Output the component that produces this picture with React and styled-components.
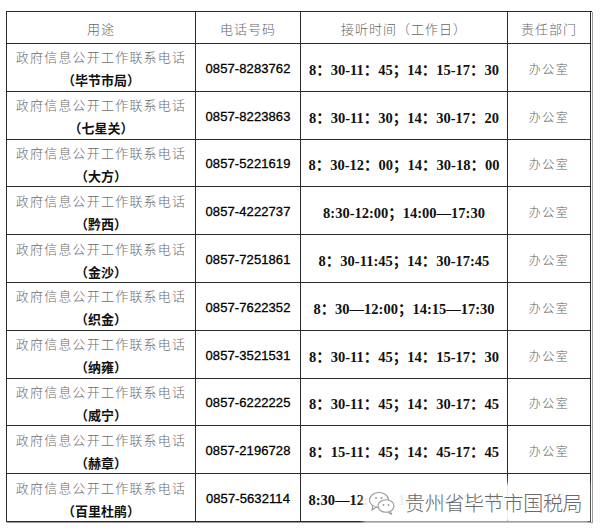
import React from 'react';
import styled, { createGlobalStyle } from 'styled-components';

const GlobalStyle = createGlobalStyle`
  html, body {
    margin: 0;
    padding: 0;
    background: #fff;
  }
  body {
    font-family: "Noto Sans CJK SC", "Liberation Sans", sans-serif;
  }
`;

const Page = styled.div`
  position: relative;
  width: 600px;
  height: 532px;
  padding: 11px 0 0 6px;
  box-sizing: border-box;
  background: #fff;
`;

const Grid = styled.div`
  display: grid;
  grid-template-columns: 189px 105px 207px 83px;
  grid-template-rows: 32px repeat(10, 47.8px);
  width: 585px;
  border-top: 1px solid #2a2a2a;
  border-left: 1px solid #2a2a2a;
  box-shadow: 1px 1px 0 #9a9a9a;
`;

const Cell = styled.div`
  display: flex;
  flex-direction: column;
  align-items: center;
  justify-content: center;
  padding-top: ${props => (props.$head ? '1px' : '2px')};
  border-right: 1px solid #2a2a2a;
  border-bottom: 1px solid #2a2a2a;
  box-sizing: border-box;
  overflow: hidden;
  white-space: nowrap;
`;

const HeadText = styled.span`
  font-family: "Noto Sans CJK SC", sans-serif;
  font-weight: 300;
  font-size: 13px;
  letter-spacing: 1px;
  color: #666;
`;

const Purpose = styled.span`
  font-family: "Noto Sans CJK SC", sans-serif;
  font-weight: 300;
  font-size: 13px;
  letter-spacing: 1.2px;
  color: #6c6c6c;
  line-height: 23px;
`;

const Place = styled.span`
  font-family: "Noto Sans CJK SC", sans-serif;
  font-weight: 700;
  font-size: 13px;
  color: #111;
  line-height: 23px;
`;

const Phone = styled.span`
  font-family: "Liberation Sans", Arial, sans-serif;
  font-size: 13px;
  color: #000;
  letter-spacing: 0.1px;
  -webkit-text-stroke: 0.3px #000;
`;

const Hours = styled.span`
  font-family: "Liberation Serif", "Noto Sans CJK SC", serif;
  font-weight: 700;
  font-size: 14.5px;
  color: #111;
`;

const Office = styled.span`
  font-family: "Noto Sans CJK SC", sans-serif;
  font-weight: 300;
  font-size: 12px;
  letter-spacing: 1.5px;
  color: #5e5e5e;
`;

const Watermark = styled.div`
  position: absolute;
  left: 366px;
  top: 486px;
  display: flex;
  align-items: center;
  gap: 9px;
  padding: 2px 4px 2px 2px;
  background: rgba(255, 255, 255, 0.92);
  box-shadow: 0 0 4px 3px rgba(255, 255, 255, 0.92);
`;

const MarkText = styled.span`
  font-family: "Noto Sans CJK SC", sans-serif;
  font-weight: 300;
  font-size: 20px;
  color: #6a6a6a;
  letter-spacing: -0.3px;
`;

const rows = [
  ['毕节市局', '0857-8283762', '8：30-11：45；14：15-17：30'],
  ['七星关', '0857-8223863', '8：30-11：30；14：30-17：20'],
  ['大方', '0857-5221619', '8：30-12：00；14：30-18：00'],
  ['黔西', '0857-4222737', '8:30-12:00；14:00—17:30'],
  ['金沙', '0857-7251861', '8：30-11:45；14：30-17:45'],
  ['织金', '0857-7622352', '8：30—12:00；14:15—17:30'],
  ['纳雍', '0857-3521531', '8：30-11：45；14：15-17：30'],
  ['威宁', '0857-6222225', '8：30-11：45；14：30-17：45'],
  ['赫章', '0857-2196728', '8：15-11：45；14：45-17：45'],
  ['百里杜鹃', '0857-5632114', '8:30—12:00；14：15—17：30'],
];

const WeChatMark = () => (
  <svg width="28" height="26" viewBox="0 0 28 26" fill="none" stroke="#9a9a9a" strokeWidth="1.1">
    <ellipse cx="11" cy="10" rx="9.5" ry="7.5" fill="#fff" />
    <path d="M5 16 L4 20 L8.5 17" fill="#fff" />
    <ellipse cx="18" cy="16" rx="8" ry="6.3" fill="#fff" />
    <path d="M22 21.5 L24 24.5 L20 22.3" fill="#fff" />
    <circle cx="8" cy="8" r="1" fill="#9a9a9a" stroke="none" />
    <circle cx="13.5" cy="8" r="1" fill="#9a9a9a" stroke="none" />
    <circle cx="15.5" cy="15" r="0.9" fill="#9a9a9a" stroke="none" />
    <circle cx="20.5" cy="15" r="0.9" fill="#9a9a9a" stroke="none" />
  </svg>
);

const App = () => (
  <Page>
    <GlobalStyle />
    <Grid>
      <Cell $head><HeadText>用途</HeadText></Cell>
      <Cell $head><HeadText>电话号码</HeadText></Cell>
      <Cell $head><HeadText>接听时间（工作日）</HeadText></Cell>
      <Cell $head><HeadText>责任部门</HeadText></Cell>
      {rows.map(([place, phone, hours]) => (
        <React.Fragment key={place}>
          <Cell>
            <Purpose>政府信息公开工作联系电话</Purpose>
            <Place>（{place}）</Place>
          </Cell>
          <Cell><Phone>{phone}</Phone></Cell>
          <Cell><Hours>{hours}</Hours></Cell>
          <Cell><Office>办公室</Office></Cell>
        </React.Fragment>
      ))}
    </Grid>
    <Watermark>
      <WeChatMark />
      <MarkText>贵州省毕节市国税局</MarkText>
    </Watermark>
  </Page>
);

export default App;
